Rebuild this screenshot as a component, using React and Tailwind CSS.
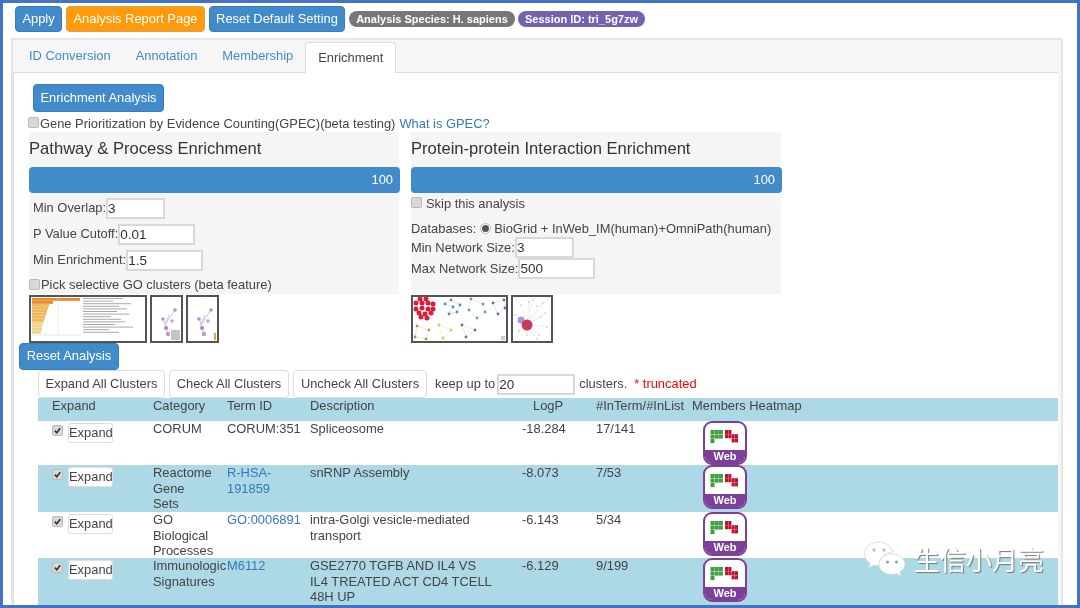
import React from 'react';

const tabs = ['ID Conversion', 'Annotation', 'Membership'];

const clusterButtons = [
  { label: 'Expand All Clusters', width: 'w-[127px]' },
  { label: 'Check All Clusters', width: 'w-[120px]' },
  { label: 'Uncheck All Clusters', width: 'w-[134px]' },
];

const rows = [
  { category: ['CORUM'], term: ['CORUM:351'], link: false, desc: ['Spliceosome'], logp: '-18.284', ratio: '17/141', height: 'h-[44px]', bg: 'bg-white' },
  { category: ['Reactome', 'Gene', 'Sets'], term: ['R-HSA-', '191859'], link: true, desc: ['snRNP Assembly'], logp: '-8.073', ratio: '7/53', height: 'h-[47px]', bg: 'bg-[#add8e6]' },
  { category: ['GO', 'Biological', 'Processes'], term: ['GO:0006891'], link: true, desc: ['intra-Golgi vesicle-mediated', 'transport'], logp: '-6.143', ratio: '5/34', height: 'h-[46px]', bg: 'bg-white' },
  { category: ['Immunologic', 'Signatures'], term: ['M6112'], link: true, desc: ['GSE2770 TGFB AND IL4 VS', 'IL4 TREATED ACT CD4 TCELL', '48H UP'], logp: '-6.129', ratio: '9/199', height: 'h-[47px]', bg: 'bg-[#add8e6]' },
];

const cols = 'grid grid-cols-[115px_74px_83px_212px_74px_96px_1fr]';

function Box({ checked }) {
  return (
    <span className="inline-flex w-[11px] h-[11px] shrink-0 items-center justify-center rounded-[2px] border border-[#bbb] bg-[#d8d8d8]">
      {checked && (
        <svg width="9" height="9" viewBox="0 0 10 10">
          <path d="M2 5.2 L4.2 7.5 L8 2.5" fill="none" stroke="#333" strokeWidth="1.8" />
        </svg>
      )}
    </span>
  );
}

function Btn({ children, className = 'bg-[#428bca] border-[#357ebd]', ...rest }) {
  return (
    <button className={`rounded-[4px] border text-white text-[12.9px] leading-none ${className}`} {...rest}>
      {children}
    </button>
  );
}

function Field({ value, className }) {
  return (
    <input
      readOnly
      value={value}
      className={`h-[21px] border-2 border-[#d8d8d8] bg-white text-[13.5px] leading-none text-[#333] pl-0 outline-none ${className}`}
    />
  );
}

function Progress() {
  return (
    <div className="h-[26px] w-[371px] rounded-[4px] bg-[#428bca] flex items-center justify-end pr-[7px] text-[12.9px] text-white">
      100
    </div>
  );
}

function WebIcon() {
  const green = [[0, 0], [1, 0], [2, 0], [0, 1], [1, 1], [2, 1], [0, 2]];
  const red = [[0, 0], [1, 0], [0, 1], [1, 1], [2, 1], [3, 1], [2, 2], [3, 2]];
  return (
    <div className="w-[44px] h-[44px] ml-[11px] rounded-[9px] border-2 border-[#7d3f98] bg-white flex flex-col overflow-hidden">
      <svg className="w-[40px] h-[27px]" viewBox="0 0 40 27">
        {green.map(([c, r]) => (
          <rect key={`g${c}${r}`} x={5.5 + c * 4.2} y={7 + r * 4.5} width="4" height="4.1" fill="#3fa03f" />
        ))}
        {red.map(([c, r]) => (
          <rect key={`r${c}${r}`} x={20 + c * 3.3} y={7 + r * 4.2} width="3.1" height="4" fill="#c1122f" />
        ))}
      </svg>
      <div className="h-[13px] bg-[#7d3f98] text-white text-[11px] font-bold leading-[13px] text-center">Web</div>
    </div>
  );
}

function Thumb({ className, children, viewBox }) {
  return (
    <div className={`h-[48px] border-2 border-[#555] bg-white overflow-hidden ${className}`}>
      <svg className="w-full h-full blur-[0.5px]" viewBox={viewBox} preserveAspectRatio="none">
        {children}
      </svg>
    </div>
  );
}

function BarThumb() {
  const bars = [48, 21, 17, 16, 15, 14, 13, 12, 11, 10, 10, 9];
  const lines = [40, 30, 48, 36, 44, 34, 46, 28, 38, 42, 32, 50, 26, 36];
  return (
    <Thumb className="w-[118px]" viewBox="0 0 114 44">
      {bars.map((w, i) => (
        <rect key={i} x="1" y={1 + i * 3} width={w} height="2.8" fill={i < 2 ? '#ec8a2d' : i < 8 ? '#efb95f' : '#eed68f'} />
      ))}
      <line x1="27" y1="1" x2="27" y2="37" stroke="#ddd" strokeWidth="0.5" />
      <line x1="1" y1="38" x2="50" y2="38" stroke="#ccc" strokeWidth="0.5" />
      {lines.map((w, i) => (
        <rect key={i} x="52" y={1 + i * 2.6} width={w} height="1" fill="#aaa" />
      ))}
    </Thumb>
  );
}

function PurpleThumb({ corner }) {
  return (
    <Thumb className="w-[33px]" viewBox="0 0 29 44">
      <path d="M23 13 L13 28 L17 18 M11 21 L15 33 L15 36" fill="none" stroke="#cdbde6" strokeWidth="1" />
      <path d="M4 8 C10 12 13 4 20 1" fill="none" stroke="#ece8f4" strokeWidth="0.5" />
      <circle cx="23" cy="13" r="1.8" fill="#a793d6" />
      <circle cx="11" cy="22" r="1.8" fill="#a793d6" />
      <circle cx="20" cy="24" r="1.8" fill="#b8a8de" />
      <circle cx="14" cy="31" r="2" fill="#9c86cf" />
      <circle cx="16" cy="37" r="2.2" fill="#c996bd" />
      {corner === 'list' && <rect x="19" y="33" width="9" height="10" fill="#c4c4c4" />}
      {corner === 'bar' && <rect x="26" y="36" width="2" height="7" fill="#e9a04c" />}
    </Thumb>
  );
}

function Group({ nodes, color, edge }) {
  const d = `M${nodes.map(([x, y]) => `${x} ${y}`).join(' L')} Z`;
  return (
    <g>
      <path d={d} fill="none" stroke={edge} strokeWidth="0.6" />
      {nodes.map(([x, y]) => <circle key={`${x}-${y}`} cx={x} cy={y} r="1.4" fill={color} />)}
    </g>
  );
}

function ClusterThumb() {
  const reds = [
    [7, 2], [13, 2],
    [3, 6], [9, 6], [15, 6], [20, 7],
    [3, 12], [9, 11], [15, 12], [20, 12],
    [6, 16], [12, 17], [18, 16],
    [8, 20], [14, 21],
  ];
  return (
    <Thumb className="w-[97px]" viewBox="0 0 93 44">
      {reds.map(([x, y]) => <circle key={`${x}-${y}`} cx={x} cy={y} r="2.5" fill="#dc1c36" />)}
      <Group nodes={[[32, 7], [38, 3], [47, 8], [44, 15], [36, 17], [40, 10]]} color="#4a90d0" edge="#c9c4e6" />
      <Group nodes={[[58, 2], [70, 7], [72, 15], [64, 21], [56, 13]]} color="#5cb36b" edge="#cfe3cf" />
      <Group nodes={[[80, 6], [91, 3], [92, 11], [85, 17]]} color="#7660b8" edge="#d2cce8" />
      <Group nodes={[[4, 29], [16, 33], [13, 42], [2, 40]]} color="#d08a3c" edge="#e6d2b8" />
      <Group nodes={[[26, 28], [38, 33], [30, 41]]} color="#c5d34c" edge="#e8ecc4" />
      <Group nodes={[[49, 28], [62, 33], [53, 40]]} color="#8f6a4c" edge="#e2d6cc" />
      <rect x="88" y="39" width="4" height="4" fill="#ccc" />
    </Thumb>
  );
}

function HairballThumb() {
  const spokes = [[5, 24], [8, 8], [16, 5], [24, 9], [32, 16], [34, 30], [26, 38], [14, 38], [6, 34], [20, 3], [30, 6], [28, 20], [24, 42], [2, 18]];
  return (
    <Thumb className="w-[42px]" viewBox="0 0 38 44">
      {spokes.map(([x, y], i) => (
        <g key={i}>
          <line x1="14" y1="27" x2={x} y2={y} stroke="#d9d6ee" strokeWidth="0.5" />
          <circle cx={x} cy={y} r="0.7" fill={i % 3 === 0 ? '#8fc9a8' : i % 3 === 1 ? '#d9b48f' : '#a9a0dc'} />
        </g>
      ))}
      <circle cx="8" cy="23" r="3.5" fill="#9c9fdc" />
      <circle cx="14" cy="28" r="5.5" fill="#c93a5c" />
    </Thumb>
  );
}

function WeChatMark() {
  return (
    <svg width="42" height="36" viewBox="0 0 42 36">
      <g stroke="#cfd6da" strokeWidth="0.8">
        <path d="M15 1 C6.5 1 0.5 6.5 0.5 13 C0.5 17 2.6 20 6 22 L4.5 27 L10 24 C12 24.6 14 24.8 16 24.7 C14 18 20 11 29 11 C27.5 5.5 21.5 1 15 1 Z" fill="#fff" />
        <path d="M28 13 C20.5 13 15 18 15 23.5 C15 29 20.5 33.5 28 33.5 C29.5 33.5 31 33.3 32.5 32.8 L37 35 L35.8 31 C38.8 29 41 26.5 41 23.5 C41 18 35.5 13 28 13 Z" fill="#fff" />
      </g>
      <circle cx="10" cy="9" r="1.7" fill="#b7c2c8" />
      <circle cx="20" cy="9" r="1.7" fill="#b7c2c8" />
      <circle cx="23.5" cy="21" r="1.5" fill="#8fa0a8" />
      <circle cx="32.5" cy="21" r="1.5" fill="#8fa0a8" />
    </svg>
  );
}

export default function App() {
  return (
    <div className="relative w-[1080px] h-[608px] overflow-hidden border-[3px] border-[#4472c4] bg-white font-['Liberation_Sans',Arial,sans-serif] text-[12.9px] text-[#444] blur-[0.35px]">
      {/* top action bar */}
      <div className="flex items-center gap-[4px] pl-[12px] pt-[3px]">
        <Btn className="w-[47px] h-[26px] bg-[#428bca] border-[#357ebd]">Apply</Btn>
        <Btn className="w-[139px] h-[26px] bg-[#ff9a0d] border-[#d9a441]">Analysis Report Page</Btn>
        <Btn className="w-[136px] h-[26px] bg-[#428bca] border-[#357ebd]">Reset Default Setting</Btn>
        <span className="h-[16px] w-[166px] rounded-full bg-[#777] text-white text-[11px] font-bold leading-[16px] text-center">Analysis Species: H. sapiens</span>
        <span className="h-[16px] w-[127px] -ml-px rounded-full bg-[#7461b0] text-white text-[11px] font-bold leading-[16px] text-center">Session ID: tri_5g7zw</span>
      </div>

      {/* tabbed panel */}
      <div className="ml-[8px] mt-[6px] w-[1052px] h-[570px] border-2 border-b-0 border-[#e6e6e6] bg-[#f6f6f6] pr-[3px]">
        <div className="flex items-end h-[32px] pl-[16px]">
          {tabs.map((t) => (
            <a key={t} className="mr-[25px] pb-[7px] text-[#428bca]">{t}</a>
          ))}
          <span className="h-[31px] w-[91px] -ml-[13px] -mb-px rounded-t-[4px] border border-b-0 border-[#ddd] bg-white text-[#444] text-center leading-[29px] z-10">Enrichment</span>
        </div>

        <div className="h-full border-t border-l border-[#ddd] bg-white">
          <Btn className="block ml-[19px] mt-[11px] w-[131px] h-[28px] bg-[#428bca] border-[#357ebd]">Enrichment Analysis</Btn>
          <div className="flex items-center h-[17px] ml-[14px] mt-[3px]">
            <span className="-mt-[3px] flex"><Box /></span>
            <span className="ml-px">Gene Prioritization by Evidence Counting(GPEC)(beta testing)</span>
            <a className="ml-[4px] text-[#337ab7]">What is GPEC?</a>
          </div>

          <div className="flex gap-[12px] ml-[15px]">
            {/* pathway column */}
            <div className="w-[370px]">
              <div className="h-[162px] bg-[#f5f5f5]">
                <h4 className="h-[35px] text-[16.6px] leading-[33px] text-[#333]">Pathway &amp; Process Enrichment</h4>
                <Progress />
                <div className="flex items-center h-[26px] mt-[2px] ml-[4px]"><span>Min Overlap:</span><Field value="3" className="w-[59px]" /></div>
                <div className="flex items-center h-[26px] ml-[4px]"><span>P Value Cutoff:</span><Field value="0.01" className="w-[77px]" /></div>
                <div className="flex items-center h-[26px] ml-[4px]"><span>Min Enrichment:</span><Field value="1.5" className="w-[77px]" /></div>
                <div className="flex items-center h-[20px] mt-[2px]"><span className="-mt-[2px] flex"><Box /></span><span className="ml-[1px]">Pick selective GO clusters (beta feature)</span></div>
              </div>
              <div className="flex gap-[3px] mt-px">
                <BarThumb />
                <PurpleThumb corner="list" />
                <PurpleThumb corner="bar" />
              </div>
            </div>

            {/* ppi column */}
            <div className="w-[370px]">
              <div className="h-[162px] bg-[#f5f5f5]">
                <h4 className="h-[35px] text-[16.6px] leading-[33px] text-[#333]">Protein-protein Interaction Enrichment</h4>
                <Progress />
                <div className="flex items-center h-[20px] mt-[1px]">
                  <span className="-mt-[3px] flex"><Box /></span>
                  <span className="ml-[4px]">Skip this analysis</span>
                </div>
                <div className="flex items-center h-[20px] mt-[5px] whitespace-nowrap">
                  <span>Databases:</span>
                  <span className="ml-[4px] mr-[3px] -mt-[1px] inline-flex w-[11px] h-[11px] shrink-0 items-center justify-center rounded-full border border-[#bbb] bg-white">
                    <span className="w-[7px] h-[7px] rounded-full bg-[#555]" />
                  </span>
                  <span>BioGrid + InWeb_IM(human)+OmniPath(human)</span>
                </div>
                <div className="flex items-center h-[21px] -mt-[2px]"><span>Min Network Size:</span><Field value="3" className="w-[59px]" /></div>
                <div className="flex items-center h-[21px]"><span>Max Network Size:</span><Field value="500" className="w-[77px]" /></div>
              </div>
              <div className="flex gap-[3px] mt-px">
                <ClusterThumb />
                <HairballThumb />
              </div>
            </div>
          </div>

          <Btn className="block ml-[5px] w-[100px] h-[27px] bg-[#428bca] border-[#357ebd]">Reset Analysis</Btn>

          <div className="flex items-center gap-[4px] ml-[24px] h-[28px]">
            {clusterButtons.map((b) => (
              <button key={b.label} className={`h-[28px] rounded-[4px] border border-[#ddd] bg-white text-[12.9px] text-[#444] ${b.width}`}>{b.label}</button>
            ))}
            <span className="ml-[4px] -mr-[2px]">keep up to</span>
            <Field value="20" className="w-[78px]" />
            <span>clusters.</span>
            <span className="ml-[3px] text-[#f00]">* truncated</span>
          </div>

          {/* results table */}
          <div className="ml-[24px] w-[1020px]">
            <div className={`${cols} h-[23px] bg-[#add8e6] leading-[15.5px]`}>
              <span className="pl-[14px]">Expand</span>
              <span>Category</span>
              <span>Term ID</span>
              <span>Description</span>
              <span className="pl-[11px]">LogP</span>
              <span>#InTerm/#InList</span>
              <span>Members Heatmap</span>
            </div>
            {rows.map((r) => (
              <div key={r.term[0]} className={`${cols} ${r.height} ${r.bg} leading-[15.5px] overflow-hidden`}>
                <div className="flex items-start pl-[14px] pt-[2px] gap-[5px]">
                  <span className="mt-[2px] flex"><Box checked /></span>
                  <button className="w-[45px] h-[20px] rounded-[3px] border border-[#ddd] bg-white text-[12.9px] leading-none text-[#444]">Expand</button>
                </div>
                <div>{r.category.map((c) => <div key={c}>{c}</div>)}</div>
                <div className={r.link ? 'text-[#337ab7]' : ''}>{r.term.map((c) => <div key={c}>{c}</div>)}</div>
                <div>{r.desc.map((c) => <div key={c}>{c}</div>)}</div>
                <div>{r.logp}</div>
                <div>{r.ratio}</div>
                <WebIcon />
              </div>
            ))}
          </div>
        </div>
      </div>

      {/* wechat watermark */}
      <div className="absolute left-[861px] top-[538px] flex items-center gap-[8px]">
        <WeChatMark />
        <span className="font-['Noto_Sans_CJK_SC',sans-serif] text-[26px] leading-none text-white [text-shadow:1px_1px_1px_#777]">生信小月亮</span>
      </div>
    </div>
  );
}
